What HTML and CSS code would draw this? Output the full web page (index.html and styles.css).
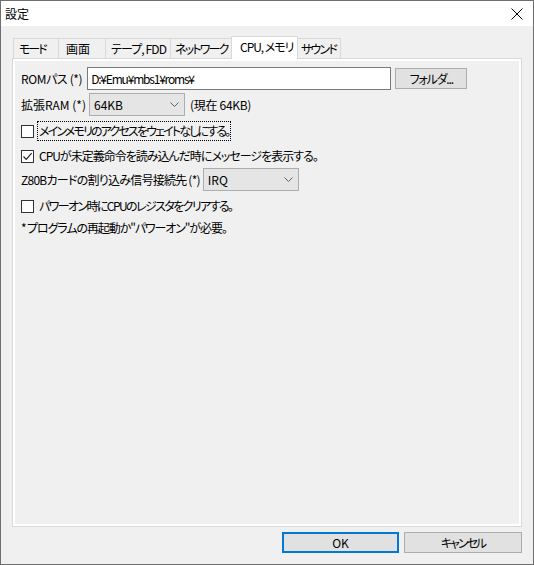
FILE: index.html
```html
<!DOCTYPE html>
<html lang="ja">
<head>
<meta charset="utf-8">
<link rel="stylesheet" href="styles.css">
</head>
<body>
<div class="window">
  <div class="titlebar">
    <span class="title">設定</span>
    <svg class="close" width="12" height="12" viewBox="0 0 12 12"><path d="M0.5 0.5 L11.5 11.5 M11.5 0.5 L0.5 11.5" stroke="#000" stroke-width="1" fill="none"/></svg>
  </div>
  <div class="client">
    <div class="tabs">
      <div class="tab w1">モード</div>
      <div class="tab w2">画面</div>
      <div class="tab w3">テープ, FDD</div>
      <div class="tab w4">ネットワーク</div>
      <div class="tab active w5">CPU, メモリ</div>
      <div class="tab w6">サウンド</div>
    </div>
    <div class="panel">
      <div class="row row-rom">
        <span class="label ls-rom">ROMパス (*)</span>
        <div class="input">D:¥Emu¥mbs1¥roms¥</div>
        <div class="btn btn-folder">フォルダ...</div>
      </div>
      <div class="row row-ram">
        <span class="label">拡張RAM (*)</span>
        <div class="select sel-ram"><span>64KB</span><svg class="chev" width="9" height="5" viewBox="0 0 9 5"><path d="M0.5 0.5 L4.5 4.5 L8.5 0.5" stroke="#606060" fill="none"/></svg></div>
        <span class="label note-now">(現在 64KB)</span>
      </div>
      <div class="check row-c1">
        <span class="box"></span>
        <span class="clabel focus ls-a">メインメモリのアクセスをウェイトなしにする。</span>
      </div>
      <div class="check row-c2">
        <span class="box"><svg width="11" height="11" viewBox="0 0 11 11"><path d="M1.5 5.5 L4.2 8.3 L9.6 2.2" stroke="#222" stroke-width="1.2" fill="none"/></svg></span>
        <span class="clabel ls-b">CPUが未定義命令を読み込んだ時にメッセージを表示する。</span>
      </div>
      <div class="row row-z80">
        <span class="label ls-z">Z80Bカードの割り込み信号接続先 (*)</span>
        <div class="select sel-irq"><span>IRQ</span><svg class="chev" width="9" height="5" viewBox="0 0 9 5"><path d="M0.5 0.5 L4.5 4.5 L8.5 0.5" stroke="#606060" fill="none"/></svg></div>
      </div>
      <div class="check row-c3">
        <span class="box"></span>
        <span class="clabel ls-c">パワーオン時にCPUのレジスタをクリアする。</span>
      </div>
      <div class="note">* プログラムの再起動か"パワーオン"が必要。</div>
    </div>
    <div class="buttons">
      <div class="btn btn-ok">OK</div>
      <div class="btn btn-cancel">キャンセル</div>
    </div>
  </div>
</div>
</body>
</html>
```
FILE: styles.css
```css
* { box-sizing: border-box; }
html, body { margin: 0; padding: 0; }
body {
  font-family: "Noto Sans CJK JP", "Noto Sans", sans-serif;
  font-size: 12px;
  font-feature-settings: "palt";
  color: #000;
  background: #f0f0f0;
}
.window {
  width: 534px;
  height: 565px;
  border: 1px solid #6e6e6e;
  background: #f0f0f0;
  display: flex;
  flex-direction: column;
}
.titlebar {
  height: 25px;
  background: #fff;
  display: flex;
  align-items: center;
  justify-content: space-between;
  padding: 0 10px 0 4px;
  flex: none;
}
.title { font-size: 12px; line-height: 1; }
.close { display: block; }
.client {
  flex: 1;
  padding: 10px 11px 0 11px;
  display: flex;
  flex-direction: column;
}
.tabs {
  display: flex;
  align-items: flex-end;
  height: 22px;
  margin-left: 1px;
}
.tab {
  flex: none;
  height: 20px;
  border: 1px solid #d9d9d9;
  border-bottom: none;
  border-left: none;
  background: #f0f0f0;
  padding-left: 5px;
  line-height: 19px;
  white-space: nowrap;
  overflow: hidden;
  letter-spacing: -1.2px;
}
.tab.w1 { border-left: 1px solid #d9d9d9; width: 46px; letter-spacing: -2px; }
.tab.w2 { width: 47px; padding-left: 7px; letter-spacing: 0; }
.tab.w3 { width: 65px; letter-spacing: -0.9px; }
.tab.w4 { width: 61px; padding-left: 4px; letter-spacing: -1.8px; }
.tab.w5 { width: 67px; letter-spacing: -1px; }
.tab.w6 { width: 43px; padding-left: 3px; letter-spacing: -1.8px; }
.tab.active {
  height: 23px;
  background: #fff;
  border-left: 1px solid #d9d9d9;
  margin-left: -1px;
  margin-bottom: -1px;
  position: relative;
  z-index: 1;
  line-height: 19px;
  padding-left: 8px;
}
.panel {
  width: 510px;
  height: 469px;
  border: 1px solid #d9d9d9;
  box-shadow: inset 0 0 0 2px #fff;
  background: #f0f0f0;
  padding: 8px 8px 0 8px;
  display: flex;
  flex-direction: column;
}
.row { display: flex; align-items: center; }
.row-rom { height: 23px; }
.label { white-space: nowrap; }
.ls-rom { letter-spacing: -0.4px; margin-right: 1px; }
.ls-z { letter-spacing: -0.75px; }
.ls-a { letter-spacing: -1.85px; }
.ls-b { letter-spacing: -1px; }
.ls-c { letter-spacing: -1.6px; }
.input {
  margin-left: 4px;
  width: 304px;
  height: 23px;
  border: 1px solid #7a7a7a;
  background: #fff;
  padding-left: 3px;
  line-height: 21px;
  letter-spacing: -1.2px;
}
.btn {
  background: #e1e1e1;
  border: 1px solid #adadad;
  text-align: center;
  white-space: nowrap;
}
.btn-folder {
  margin-left: 4px;
  width: 72px;
  height: 21px;
  line-height: 19px;
  letter-spacing: -1.2px;
}
.row-ram { height: 23px; margin-top: 3px; }
.select {
  height: 23px;
  background: #e5e5e5;
  border: 1px solid #adadad;
  display: flex;
  align-items: center;
  justify-content: space-between;
  padding: 0 5px 0 4px;
}
.sel-ram { width: 96px; margin-left: 3px; }
.sel-irq { width: 96px; margin-left: 3px; }
.note-now { margin-left: 5px; letter-spacing: -0.3px; }
.chev { display: block; }
.check { display: flex; align-items: center; height: 20px; }
.box {
  width: 13px;
  height: 13px;
  border: 1px solid #333;
  background: #fff;
  flex: none;
  display: flex;
  align-items: center;
  justify-content: center;
}
.box svg { display: block; }
.clabel {
  margin-left: 3px;
  padding: 0 1px;
  height: 20px;
  line-height: 18px;
  white-space: nowrap;
  border: 1px solid transparent;
}
.clabel.focus { border: 1px dotted #000; }
.row-c1 { margin-top: 5px; }
.row-c2 { margin-top: 5px; }
.row-z80 { height: 23px; margin-top: 2px; }
.row-c3 { margin-top: 5px; }
.note {
  margin-top: 3px;
  height: 18px;
  line-height: 18px;
  white-space: nowrap;
  letter-spacing: -1.1px;
}
.buttons {
  display: flex;
  justify-content: flex-end;
  gap: 5px;
  margin-top: 5px;
}
.btn-ok {
  width: 117px;
  height: 21px;
  border: 2px solid #0078d7;
  line-height: 17px;
}
.btn-cancel {
  width: 118px;
  height: 21px;
  line-height: 19px;
  letter-spacing: -2px;
}
```
